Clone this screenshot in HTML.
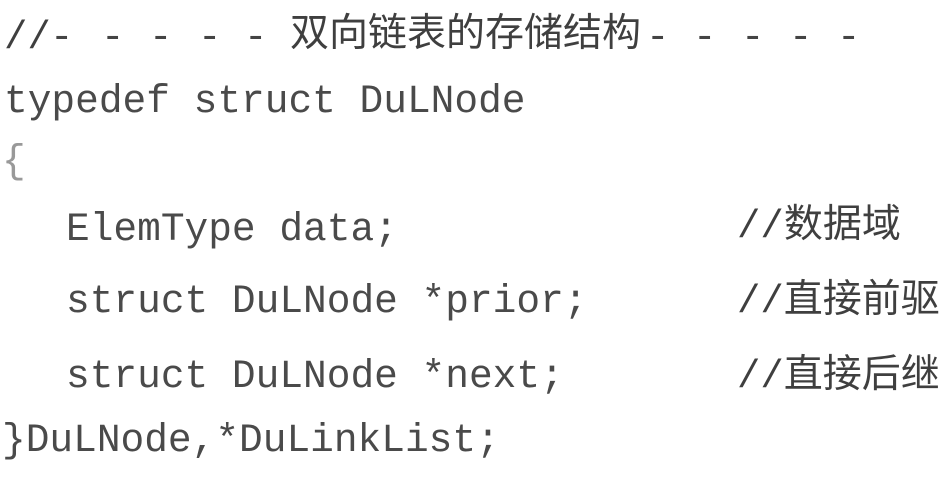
<!DOCTYPE html>
<html><head><meta charset="utf-8"><style>
html,body{margin:0;padding:0;background:#fff;width:951px;height:484px;overflow:hidden}
.l{position:absolute;white-space:pre;font-family:"Liberation Mono","Noto Sans CJK SC",monospace;font-size:39.5px;line-height:40px;color:#4a4a4a}
.c{position:absolute;white-space:pre;font-family:"Liberation Mono","Noto Sans CJK SC",sans-serif;font-size:39px;line-height:40px;color:#3f3f3f}
.d{position:absolute;top:18px;font-family:"Liberation Mono",monospace;font-size:39px;line-height:40px;color:#444}
</style></head><body>
<div class="c" style="left:4px;top:18px">//</div>
<div class="d" style="left:50px">-</div>
<div class="d" style="left:101px">-</div>
<div class="d" style="left:149px">-</div>
<div class="d" style="left:198px">-</div>
<div class="d" style="left:244px">-</div>
<div class="c" style="left:290px;top:16px;letter-spacing:0px">双向链表的存储结构</div>
<div class="d" style="left:646px">-</div>
<div class="d" style="left:693px">-</div>
<div class="d" style="left:741px">-</div>
<div class="d" style="left:789px">-</div>
<div class="d" style="left:837px">-</div>
<div class="l" style="left:4px;top:82px">typedef struct DuLNode</div>
<div class="l" style="left:2px;top:142px;color:#999">{</div>
<div class="l" style="left:66px;top:210px">ElemType data;</div>
<div class="l" style="left:66px;top:282px">struct DuLNode *prior;</div>
<div class="l" style="left:66px;top:357px">struct DuLNode *next;</div>
<div class="c" style="left:737px;top:207px">//<span style="font-size:39px">数据域</span></div>
<div class="c" style="left:737px;top:282px">//直接前驱</div>
<div class="c" style="left:737px;top:357px">//直接后继</div>
<div class="l" style="left:2px;top:421px">}DuLNode,*DuLinkList;</div>
</body></html>
